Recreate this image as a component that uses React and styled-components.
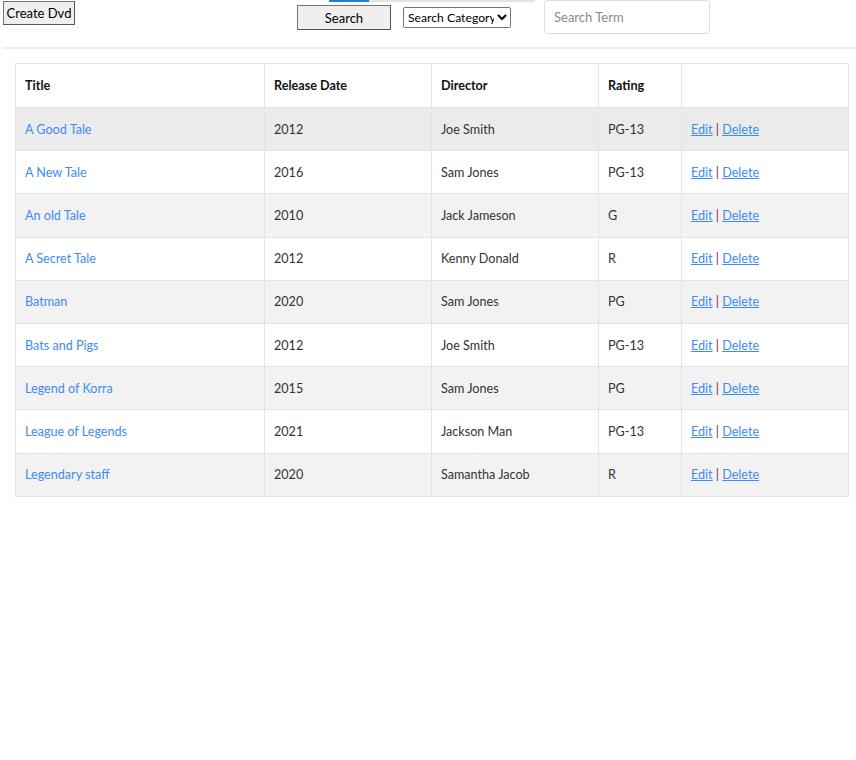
import React from 'react';
import styled, { createGlobalStyle } from 'styled-components';

const GlobalStyle = createGlobalStyle`
  body {
    margin: 0;
    background: #fff;
    font-family: Lato, 'Noto Sans', sans-serif;
  }
`;

const TopBar = styled.div`
  position: relative;
  display: flex;
  align-items: flex-start;
  height: 47px;
  padding-left: 3px;

  &::before {
    content: '';
    position: absolute;
    top: 0;
    left: 329px;
    width: 206px;
    height: 2px;
    background: linear-gradient(to right, #1a7fe0 0 40px, #e4e4e4 40px);
  }
`;

const OldButton = styled.button`
  font-family: Lato, sans-serif;
  font-size: 13px;
  color: #000;
  background: #efefef;
  border: 1px solid #767676;
  border-right-color: #555;
  border-bottom-color: #555;
  border-radius: 0;
  padding: 0;
  height: ${p => p.$h}px;
  width: ${p => p.$w}px;
  margin-top: ${p => p.$top}px;
  margin-left: ${p => p.$left || 0}px;
`;

const CategorySelect = styled.select`
  font-family: Lato, sans-serif;
  font-size: 12.2px;
  color: #000;
  width: 108px;
  height: 21px;
  margin-top: 7px;
  margin-left: 12px;
  padding: 0;
  border: 1px solid #767676;
  border-radius: 2px;
  background: #fff;
`;

const SearchInput = styled.input`
  font-family: Lato, sans-serif;
  font-size: 13px;
  box-sizing: border-box;
  width: 166px;
  height: 34px;
  margin-left: 33px;
  padding: 0 9px;
  border: 1px solid #dcdcdc;
  border-radius: 4px;
  color: #333;

  &::placeholder {
    color: #8a8a8a;
  }
`;

const Rule = styled.hr`
  margin: 0 0 0 3px;
  border: 0;
  height: 2px;
  background: #efefef;
`;

const Table = styled.table`
  margin: 14px 0 0 15px;
  width: 834px;
  border-collapse: collapse;
  font-size: 12.6px;
  color: #333;
`;

const Th = styled.th`
  text-align: left;
  font-weight: 700;
  color: #111;
  height: 44px;
  padding: 0 9px;
  border: 1px solid #e1e4e8;
  width: ${p => p.$w}px;
  box-sizing: border-box;
`;

const Row = styled.tr`
  background: ${p => (p.$hover ? '#ebebeb' : p.$odd ? '#f2f2f2' : '#fff')};
`;

const Td = styled.td`
  height: 42.2px;
  padding: 0 9px;
  border: 1px solid #e1e4e8;
`;

const TitleLink = styled.a`
  color: #3d8bf7;
  text-decoration: none;
`;

const ActionLink = styled.a`
  color: #3d8bf7;
  text-decoration: underline;
`;

const Pipe = styled.span`
  color: #7a2a3c;
`;

const dvds = [
  ['A Good Tale', '2012', 'Joe Smith', 'PG-13'],
  ['A New Tale', '2016', 'Sam Jones', 'PG-13'],
  ['An old Tale', '2010', 'Jack Jameson', 'G'],
  ['A Secret Tale', '2012', 'Kenny Donald', 'R'],
  ['Batman', '2020', 'Sam Jones', 'PG'],
  ['Bats and Pigs', '2012', 'Joe Smith', 'PG-13'],
  ['Legend of Korra', '2015', 'Sam Jones', 'PG'],
  ['League of Legends', '2021', 'Jackson Man', 'PG-13'],
  ['Legendary staff', '2020', 'Samantha Jacob', 'R'],
];

export default function App() {
  return (
    <>
      <GlobalStyle />
      <TopBar>
        <OldButton $w={72} $h={24} $top={1}>Create Dvd</OldButton>
        <OldButton $w={94} $h={25} $top={5} $left={222}>Search</OldButton>
        <CategorySelect defaultValue="">
          <option value="">Search Category</option>
          <option value="title">Title</option>
          <option value="year">Release Year</option>
          <option value="director">Director</option>
          <option value="rating">Rating</option>
        </CategorySelect>
        <SearchInput placeholder="Search Term" />
      </TopBar>
      <Rule />
      <Table>
        <thead>
          <tr>
            <Th $w={249}>Title</Th>
            <Th $w={167}>Release Date</Th>
            <Th $w={167}>Director</Th>
            <Th $w={83}>Rating</Th>
            <Th $w={167}></Th>
          </tr>
        </thead>
        <tbody>
          {dvds.map((d, i) => (
            <Row key={d[0]} $odd={i % 2 === 0} $hover={i === 0}>
              <Td><TitleLink href="#">{d[0]}</TitleLink></Td>
              <Td>{d[1]}</Td>
              <Td>{d[2]}</Td>
              <Td>{d[3]}</Td>
              <Td>
                <ActionLink href="#">Edit</ActionLink>
                <Pipe> | </Pipe>
                <ActionLink href="#">Delete</ActionLink>
              </Td>
            </Row>
          ))}
        </tbody>
      </Table>
    </>
  );
}
